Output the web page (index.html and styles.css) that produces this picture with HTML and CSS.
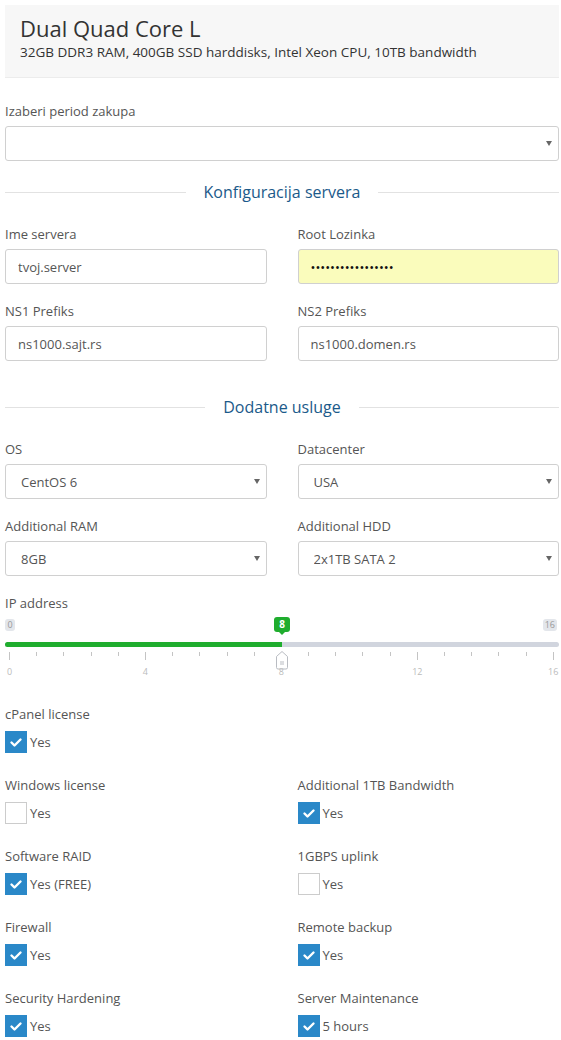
FILE: index.html
```html
<!DOCTYPE html>
<html lang="sr">
<head>
    <meta charset="UTF-8">
    <meta name="viewport" content="width=device-width, initial-scale=1.0">
    <title>Dual Quad Core L - Konfiguracija</title>
    <link rel="stylesheet" href="styles.css">
</head>
<body>
    <div class="page">
        <div class="product">
            <h2>Dual Quad Core L</h2>
            <p>32GB DDR3 RAM, 400GB SSD harddisks, Intel Xeon CPU, 10TB bandwidth</p>
        </div>

        <div class="field period">
            <label>Izaberi period zakupa</label>
            <div class="select-wrap">
                <select class="control"><option></option></select>
            </div>
        </div>

        <h3 class="divider"><span>Konfiguracija servera</span></h3>

        <div class="row">
            <div class="field">
                <label>Ime servera</label>
                <input class="control" type="text" value="tvoj.server">
            </div>
            <div class="field">
                <label>Root Lozinka</label>
                <input class="control autofill" type="password" value="xxxxxxxxxxxxxxxxx">
            </div>
        </div>

        <div class="row">
            <div class="field">
                <label>NS1 Prefiks</label>
                <input class="control" type="text" value="ns1000.sajt.rs">
            </div>
            <div class="field">
                <label>NS2 Prefiks</label>
                <input class="control" type="text" value="ns1000.domen.rs">
            </div>
        </div>

        <h3 class="divider extras"><span>Dodatne usluge</span></h3>

        <div class="row">
            <div class="field">
                <label>OS</label>
                <div class="select-wrap">
                    <select class="control"><option>CentOS 6</option></select>
                </div>
            </div>
            <div class="field">
                <label>Datacenter</label>
                <div class="select-wrap">
                    <select class="control"><option>USA</option></select>
                </div>
            </div>
        </div>

        <div class="row">
            <div class="field">
                <label>Additional RAM</label>
                <div class="select-wrap">
                    <select class="control"><option>8GB</option></select>
                </div>
            </div>
            <div class="field">
                <label>Additional HDD</label>
                <div class="select-wrap">
                    <select class="control"><option>2x1TB SATA 2</option></select>
                </div>
            </div>
        </div>

        <div class="field ip">
            <label>IP address</label>
            <div class="slider">
                <div class="slider-tips">
                    <span class="tip">0</span>
                    <span class="tip">16</span>
                    <span class="tip tip-value" style="left: 50%">8</span>
                </div>
                <div class="slider-track">
                    <div class="slider-fill" style="width: 50%"></div>
                </div>
                <div class="slider-scale">
                    <span class="tick major"><em>0</em></span>
                    <span class="tick"></span>
                    <span class="tick"></span>
                    <span class="tick"></span>
                    <span class="tick"></span>
                    <span class="tick major"><em>4</em></span>
                    <span class="tick"></span>
                    <span class="tick"></span>
                    <span class="tick"></span>
                    <span class="tick"></span>
                    <span class="tick major"><em>8</em></span>
                    <span class="tick"></span>
                    <span class="tick"></span>
                    <span class="tick"></span>
                    <span class="tick"></span>
                    <span class="tick major"><em>12</em></span>
                    <span class="tick"></span>
                    <span class="tick"></span>
                    <span class="tick"></span>
                    <span class="tick"></span>
                    <span class="tick major"><em>16</em></span>
                </div>
                <svg class="slider-handle" style="left: 271px" width="12" height="19" viewBox="0 0 12 19">
                    <path d="M0.5 5.5 L6 0.5 L11.5 5.5 L11.5 16.5 Q11.5 18 10 18 L2 18 Q0.5 18 0.5 16.5 Z" fill="#fff" stroke="#b9bcc2"/>
                    <path d="M5 10 V14 M7 10 V14" stroke="#b9bcc2"/>
                </svg>
            </div>
        </div>

        <div class="check-field">
            <span class="check-title">cPanel license</span>
            <label class="check"><span class="box checked"><svg width="22" height="22" viewBox="0 0 22 22"><polyline points="6.5,11.5 9.5,14.5 15.5,8.5" /></svg></span>Yes</label>
        </div>

        <div class="check-grid">
            <div class="check-field">
                <span class="check-title">Windows license</span>
                <label class="check"><span class="box"></span>Yes</label>
            </div>
            <div class="check-field">
                <span class="check-title">Additional 1TB Bandwidth</span>
                <label class="check"><span class="box checked"><svg width="22" height="22" viewBox="0 0 22 22"><polyline points="6.5,11.5 9.5,14.5 15.5,8.5" /></svg></span>Yes</label>
            </div>
            <div class="check-field">
                <span class="check-title">Software RAID</span>
                <label class="check"><span class="box checked"><svg width="22" height="22" viewBox="0 0 22 22"><polyline points="6.5,11.5 9.5,14.5 15.5,8.5" /></svg></span>Yes (FREE)</label>
            </div>
            <div class="check-field">
                <span class="check-title">1GBPS uplink</span>
                <label class="check"><span class="box"></span>Yes</label>
            </div>
            <div class="check-field">
                <span class="check-title">Firewall</span>
                <label class="check"><span class="box checked"><svg width="22" height="22" viewBox="0 0 22 22"><polyline points="6.5,11.5 9.5,14.5 15.5,8.5" /></svg></span>Yes</label>
            </div>
            <div class="check-field">
                <span class="check-title">Remote backup</span>
                <label class="check"><span class="box checked"><svg width="22" height="22" viewBox="0 0 22 22"><polyline points="6.5,11.5 9.5,14.5 15.5,8.5" /></svg></span>Yes</label>
            </div>
            <div class="check-field">
                <span class="check-title">Security Hardening</span>
                <label class="check"><span class="box checked"><svg width="22" height="22" viewBox="0 0 22 22"><polyline points="6.5,11.5 9.5,14.5 15.5,8.5" /></svg></span>Yes</label>
            </div>
            <div class="check-field">
                <span class="check-title">Server Maintenance</span>
                <label class="check"><span class="box checked"><svg width="22" height="22" viewBox="0 0 22 22"><polyline points="6.5,11.5 9.5,14.5 15.5,8.5" /></svg></span>5 hours</label>
            </div>
        </div>
    </div>
</body>
</html>
```

FILE: styles.css
```css
body {
    margin: 0;
    font-family: "Open Sans", "DejaVu Sans", sans-serif;
    font-size: 13px;
    color: #555;
    background-color: #fff;
}
.page {
    padding: 5px 2px 20px 5px;
}

/* Product summary box */
.product {
    background-color: #f7f7f7;
    border-bottom: 1px solid #ececec;
    padding: 8px 15px 16px;
}
.product h2 {
    margin: 0;
    font-size: 22px;
    font-weight: 400;
    line-height: 30px;
    color: #333;
}
.product p {
    margin: 0;
    font-size: 13.5px;
    line-height: 18px;
    color: #333;
}

/* Form fields */
.field label {
    display: block;
    line-height: 18px;
    margin-bottom: 6px;
}
.period {
    margin-top: 24px;
}
.row {
    display: grid;
    grid-template-columns: 1fr 1fr;
    gap: 31px;
}
.row + .row {
    margin-top: 18px;
}
.control {
    display: block;
    width: 100%;
    height: 35px;
    box-sizing: border-box;
    border: 1px solid #d0d0d0;
    border-radius: 3px;
    background-color: #fff;
    padding: 0 12px;
    font-family: inherit;
    font-size: 13px;
    color: #555;
    outline: none;
}
.autofill {
    background-color: #fafcbc;
    color: #111;
}
select.control {
    -webkit-appearance: none;
    appearance: none;
    padding-left: 15px;
}
.select-wrap {
    position: relative;
}
.select-wrap::after {
    content: "";
    position: absolute;
    right: 7px;
    top: 15px;
    border-left: 3px solid transparent;
    border-right: 3px solid transparent;
    border-top: 5px solid #666;
    pointer-events: none;
}

/* Section titles with rules on both sides */
.divider {
    display: flex;
    align-items: center;
    gap: 18px;
    margin: 20px 0 22px;
    font-size: 16px;
    font-weight: 400;
    line-height: 22px;
    color: #1b5a8a;
}
.divider::before,
.divider::after {
    content: "";
    flex: 1;
    border-top: 1px solid #e2e2e2;
}
.divider.extras {
    margin-top: 35px;
}

/* IP address range slider */
.ip {
    margin-top: 18px;
}
.slider {
    position: relative;
}
.slider-tips {
    position: relative;
    display: flex;
    justify-content: space-between;
    align-items: center;
    height: 15px;
    margin-top: -1px;
}
.tip {
    height: 12px;
    line-height: 12px;
    padding: 0 2px;
    min-width: 6px;
    text-align: center;
    border-radius: 3px;
    background-color: #e3e6eb;
    color: #999;
    font-size: 9px;
}
.tip:nth-child(2) {
    margin-right: 2px;
}
.tip-value {
    position: absolute;
    top: 0;
    width: 16px;
    height: 15px;
    line-height: 15px;
    padding: 0;
    transform: translateX(-50%);
    background-color: #1fad2e;
    color: #fff;
    font-size: 10px;
    font-weight: 700;
}
.tip-value::after {
    content: "";
    position: absolute;
    left: 5px;
    bottom: -3px;
    border-left: 3px solid transparent;
    border-right: 3px solid transparent;
    border-top: 3px solid #1fad2e;
}
.slider-track {
    height: 5px;
    margin-top: 10px;
    border-radius: 3px;
    background-color: #d1d5de;
    overflow: hidden;
}
.slider-fill {
    height: 100%;
    background-color: #1fad2e;
}
.slider-scale {
    display: flex;
    justify-content: space-between;
    align-items: flex-start;
    height: 24px;
    margin-top: 5px;
    padding: 0 5px 0 4px;
}
.tick {
    position: relative;
    width: 1px;
    height: 4px;
    background-color: #c4c4c4;
}
.tick.major {
    height: 8px;
}
.tick em {
    position: absolute;
    z-index: 2;
    top: 13px;
    left: 50%;
    transform: translateX(-50%);
    font-style: normal;
    font-size: 9px;
    line-height: 14px;
    color: #bbb;
}
.slider-handle {
    position: absolute;
    z-index: 1;
    top: 34px;
}

/* Checkbox options */
.check-field {
    margin-top: 29px;
}
.check-grid {
    display: grid;
    grid-template-columns: 1fr 1fr;
    column-gap: 31px;
}
.check-grid .check-field {
    margin-top: 23px;
}
.check-title {
    display: block;
    line-height: 18px;
    margin-bottom: 8px;
}
.check {
    display: flex;
    align-items: center;
    gap: 3px;
    line-height: 20px;
}
.box {
    width: 22px;
    height: 22px;
    box-sizing: border-box;
    border: 1px solid #ccc;
    background-color: #fff;
}
.box.checked {
    border: none;
    background-color: #2a88c8;
}
.box svg {
    display: block;
}
.box polyline {
    fill: none;
    stroke: #fff;
    stroke-width: 2.4;
    stroke-linecap: round;
    stroke-linejoin: round;
}
```
